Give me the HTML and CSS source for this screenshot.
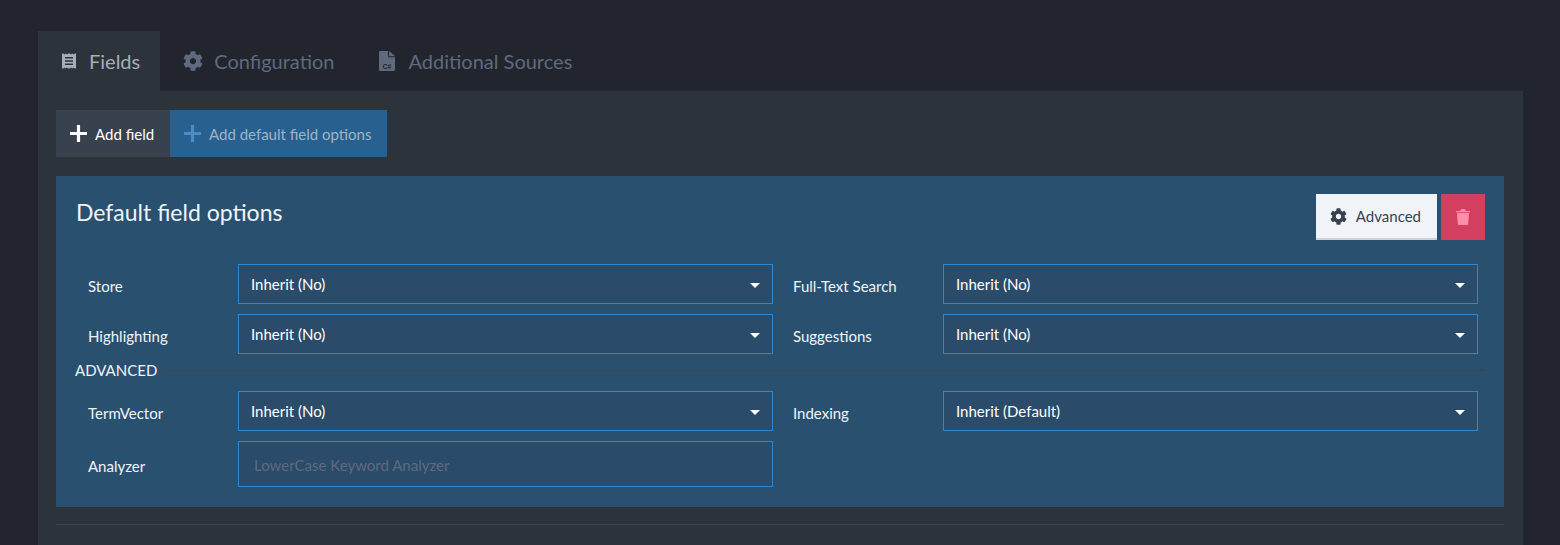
FILE: index.html
```html
<!DOCTYPE html>
<html lang="en">
<head>
<meta charset="utf-8">
<title>Fields</title>
<link rel="stylesheet" href="styles.css">
</head>
<body>
<div class="page">
  <nav class="tabs">
    <a class="tab active">
      <svg class="tab-icon" viewBox="0 0 16 16"><path fill-rule="evenodd" d="M1 0.5h1.2L3.4 1.6 4.7 .5 6 1.6 7.3 .5 8.7 .5 10 1.6 11.3 .5 12.6 1.6 13.8 .5H15v15h-1.2l-1.2-1.1-1.3 1.1L10 14.4 8.7 15.5H7.3L6 14.4 4.7 15.5 3.4 14.4 2.2 15.5H1zM4 4v1.6h8V4zM4 7.2v1.6h8V7.2zM4 10.4V12h8v-1.6z"/></svg>
      <span>Fields</span>
    </a>
    <a class="tab">
      <svg class="tab-icon" viewBox="0 0 512 512"><use href="#gear"/></svg>
      <span>Configuration</span>
    </a>
    <a class="tab">
      <svg class="tab-icon file" viewBox="0 0 16 20"><path d="M0 1.2C0 .5.5 0 1.2 0H9v5.2c0 .6.4 1 1 1h6v12.6c0 .7-.5 1.2-1.2 1.2H1.2C.5 20 0 19.500 0 18.800zM10.200 0 16 5v.2h-6z"/><text class="file-text" x="8" y="17.500" text-anchor="middle">C#</text></svg>
      <span>Additional Sources</span>
    </a>
  </nav>
  <main class="panel">
    <div class="actions">
      <button class="btn btn-dark"><svg class="plus" viewBox="0 0 16 16"><path d="M6.500 0h3v6.500H16v3H9.500V16h-3V9.500H0v-3h6.500z"/></svg>Add field</button>
      <button class="btn btn-blue"><svg class="plus" viewBox="0 0 16 16"><path d="M6.500 0h3v6.500H16v3H9.500V16h-3V9.500H0v-3h6.500z"/></svg>Add default field options</button>
    </div>
    <section class="card">
      <header class="card-head">
        <h2>Default field options</h2>
        <div class="card-tools">
          <button class="btn btn-light"><svg class="gear" viewBox="0 0 512 512"><use href="#gear"/></svg>Advanced</button>
          <button class="btn btn-danger" aria-label="Delete"><svg class="trash" viewBox="0 0 14 16"><path d="M1 4h12l-.8 10.700c-.1.700-.6 1.300-1.300 1.300H3.100c-.7 0-1.200-.6-1.300-1.300z"/><path class="trash-lid" d="M0 2h4.200l.5-1.200C4.900.3 5.200 0 5.700 0h2.600c.5 0 .8.300 1 .8l.5 1.200H14v1.200H0z"/></svg></button>
        </div>
      </header>
      <div class="grid">
        <div class="field"><label>Store</label><div class="select">Inherit (No)</div></div>
        <div class="field"><label>Full-Text Search</label><div class="select">Inherit (No)</div></div>
        <div class="field"><label>Highlighting</label><div class="select">Inherit (No)</div></div>
        <div class="field"><label>Suggestions</label><div class="select">Inherit (No)</div></div>
      </div>
      <div class="divider"><span>ADVANCED</span></div>
      <div class="grid">
        <div class="field"><label>TermVector</label><div class="select">Inherit (No)</div></div>
        <div class="field"><label>Indexing</label><div class="select">Inherit (Default)</div></div>
        <div class="field"><label>Analyzer</label><input class="input" placeholder="LowerCase Keyword Analyzer"></div>
      </div>
    </section>
    <hr class="rule">
  </main>
</div>
<svg class="defs" aria-hidden="true"><defs><path id="gear" d="M487.400 315.700l-42.600-24.600c4.300-23.200 4.300-47 0-70.200l42.600-24.600c4.900-2.800 7.100-8.600 5.500-14-11.100-35.600-30-67.800-54.700-94.600-3.800-4.100-10-5.100-14.800-2.300L380.800 110c-17.900-15.400-38.500-27.300-60.800-35.100V25.800c0-5.600-3.900-10.500-9.400-11.700-36.700-8.200-74.300-7.800-109.200 0-5.500 1.200-9.400 6.100-9.400 11.700V75c-22.200 7.900-42.800 19.800-60.800 35.100L88.700 85.500c-4.900-2.800-11-1.900-14.800 2.300-24.700 26.700-43.600 58.900-54.700 94.600-1.700 5.400.6 11.200 5.500 14L67.300 221c-4.300 23.200-4.300 47 0 70.200l-42.600 24.600c-4.900 2.800-7.100 8.600-5.500 14 11.100 35.600 30 67.800 54.700 94.600 3.800 4.100 10 5.100 14.800 2.300l42.600-24.600c17.900 15.400 38.500 27.300 60.800 35.100v49.200c0 5.600 3.900 10.500 9.400 11.700 36.700 8.200 74.300 7.800 109.200 0 5.500-1.200 9.400-6.100 9.400-11.700v-49.200c22.200-7.900 42.800-19.800 60.800-35.100l42.600 24.600c4.900 2.800 11 1.900 14.800-2.300 24.700-26.700 43.600-58.900 54.700-94.600 1.500-5.500-.7-11.300-5.600-14.100zM256 336c-44.100 0-80-35.900-80-80s35.900-80 80-80 80 35.900 80 80-35.900 80-80 80z"/></defs></svg>
</body>
</html>
```
FILE: styles.css
```css
* { box-sizing: border-box; }
html, body { margin: 0; height: 100%; overflow: hidden; }
body { background: #22252e; color: #fff; font: 15px/20px Lato, sans-serif; }
.page { height: 100%; padding: 31px 37px 0 38px; display: flex; flex-direction: column; }
.defs { display: none; }
.tabs { display: flex; height: 60px; flex: none; }
.tab { display: flex; align-items: center; padding: 0 20px 0 23px; font-size: 20px; color: #5f6a7d; }
.tab + .tab { padding-left: 23px; }
.tab.active { background: #2c333b; color: #a5aeb9; padding-right: 20px; }
.tab-icon { width: 16px; height: 16px; margin-right: 12px; fill: currentColor; flex: none; }
.tab + .tab .tab-icon { width: 20px; height: 20px; margin-right: 11px; }
.tab-icon.file { width: 16px; height: 20px; margin-right: 17px; }
.file-text { font: bold 7px "Liberation Sans", sans-serif; fill: #22252e; }
.panel { flex: 1; background: #2c333b; padding: 19px 19px 0 18px; overflow: hidden; }
.actions { display: flex; }
.btn { display: inline-flex; align-items: center; border: 0; font: inherit; height: 47px; padding: 0 16px; cursor: pointer; }
.btn-dark { background: #38424f; color: #fff; padding: 0 16px 0 14px; }
.btn-blue { background: #28608f; color: #9fb4c8; padding: 0 16px 0 14px; }
.plus { width: 17px; height: 17px; margin-right: 8px; fill: #fff; }
.btn-blue .plus { fill: #4a8cc4; }
.card { background: #2a5070; margin-top: 19px; height: 331px; padding: 18px 19px 0 20px; }
.card-head { display: flex; justify-content: space-between; height: 70px; }
.card-head h2 { margin: 0; font-size: 23px; font-weight: 400; line-height: 36px; color: #f0f4f8; }
.card-tools { display: flex; gap: 4px; height: 46px; }
.btn-light { height: 46px; background: #f0f4f8; color: #38424f; border-bottom: 2px solid #cfd4d9; padding: 0 16px 0 14px; font-size: 15px; }
.gear { width: 17px; height: 17px; margin-right: 9px; fill: #38424f; }
.btn-danger { height: 46px; width: 44px; justify-content: center; padding: 0; background: #d33f5f; }
.trash { width: 14px; height: 16px; fill: #ff8fa8; }
.trash-lid { fill: #ff8fa8; }
.grid { display: grid; grid-template-columns: 685px 685px; column-gap: 20px; row-gap: 10px; padding-left: 12px; }
.field { display: flex; align-items: center; }
.field label { width: 150px; flex: none; padding-top: 4px; color: #f0f4f8; }
.select { position: relative; width: 535px; height: 40px; border: 1px solid #2f87d0; background: #2a4b69; color: #fff; padding: 9px 12px; line-height: 20px; }
.select::after { content: ""; position: absolute; right: 12px; top: 18px; border: 5px solid transparent; border-top-color: #fff; border-bottom: 0; }
.input { width: 535px; height: 46px; border: 1px solid #2f87d0; background: #2a4b69; padding: 2px 15px 0; font: inherit; color: #fff; border-radius: 0; outline: 0; }
.input::placeholder { color: #5f6a7d; opacity: 1; }
.divider { display: flex; align-items: center; gap: 9px; margin: 6px 0 11px -1px; height: 20px; color: #f0f4f8; }
.divider::after { content: ""; flex: 1; height: 2px; background: #38485a; }
.rule { border: 0; border-top: 1px solid #3a434e; margin: 17px 0 0; }
```
